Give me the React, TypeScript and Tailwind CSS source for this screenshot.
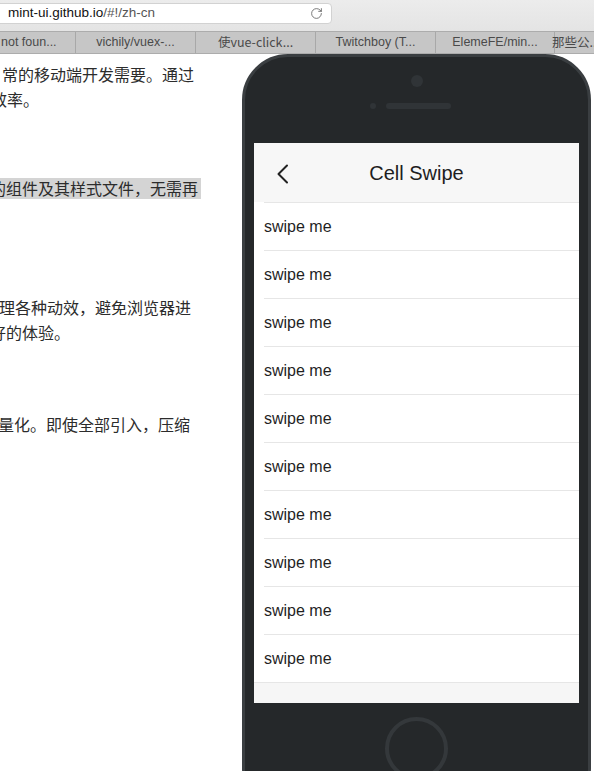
import { RotateCw } from 'lucide-react'

const tabs = ['not foun...', 'vichily/vuex-...', '使vue-click...', 'Twitchboy (T...', 'ElemeFE/min...']

const cjk = { fontFamily: '"Noto Sans CJK SC", "Noto Sans", sans-serif' }

function BrowserBar() {
  return (
    <div className="bg-gradient-to-b from-[#ececec] to-[#dedede]" style={{ fontFamily: '"Liberation Sans", Arial, sans-serif' }}>
      <div className="h-[31px] pt-[3px]">
        <div className="flex h-[21px] w-[336px] -ml-[4px] items-center justify-between rounded-[4px] border border-[#d2d2d2] bg-white pl-[11px] pr-[8px]">
          <span className="text-[13.5px] text-[#111]">
            mint-ui.github.io<span className="text-[#555]">/#!/zh-cn</span>
          </span>
          <RotateCw size={13} strokeWidth={1.6} className="text-[#666]" />
        </div>
      </div>
      <div className="flex h-[23px] border-t border-b border-[#acacac] bg-[#c6c6c6] text-[12.5px] text-[#4a4a4a]">
        <div className="flex w-[76px] items-center pl-[1px] border-r border-[#a8a8a8]">{tabs[0]}</div>
        {tabs.slice(1).map((t, i) => (
          <div
            key={t}
            className={`flex items-center justify-center border-r border-[#a8a8a8] ${i === 3 ? 'w-[119px]' : 'w-[120px]'}`}
            style={i === 1 ? cjk : undefined}
          >
            {t}
          </div>
        ))}
        <div className="flex flex-1 items-center -ml-[3px] overflow-hidden whitespace-nowrap" style={cjk}>
          那些公...
        </div>
      </div>
    </div>
  )
}

function DocText() {
  return (
    <div className="w-[242px] shrink-0 overflow-hidden whitespace-nowrap text-[16px] leading-[25px] text-[#2c2c2c]" style={cjk}>
      <p className="mt-[8px] ml-[2px]">常的移动端开发需要。通过</p>
      <p className="-ml-[9px]">效率。</p>
      <p className="mt-[66px] w-[201px] bg-[#d4d4d4] leading-[21px]">
        <span className="-ml-[10px] inline-block">的组件及其样式文件，无需再</span>
      </p>
      <p className="mt-[96px] -ml-[17px]">处理各种动效，避免浏览器进</p>
      <p className="-ml-[10px]">好的体验。</p>
      <p className="mt-[67px] -ml-[18px]">轻量化。即使全部引入，压缩</p>
    </div>
  )
}

function Phone() {
  const rows = Array.from({ length: 10 })
  return (
    <div className="h-[760px] w-[349px] shrink-0 rounded-[46px] border-[3px] border-[#3a3e41] bg-[#25282a]">
      <div className="flex h-[86px] flex-col items-center">
        <div className="mt-[18px] h-[12px] w-[12px] rounded-full bg-[#303437]" />
        <div className="mt-[16px] flex items-center gap-[10px] -ml-[13px]">
          <div className="h-[6px] w-[6px] rounded-full bg-[#303437]" />
          <div className="h-[6px] w-[65px] rounded-full bg-[#303437]" />
        </div>
      </div>
      <div className="mx-[9px] h-[560px] bg-[#f6f6f6] overflow-hidden" style={{ fontFamily: '"Liberation Sans", Arial, sans-serif' }}>
        <div className="relative flex h-[59px] items-center justify-center bg-[#f7f7f7]">
          <svg className="absolute left-[22px] top-[21px]" width="14" height="20" viewBox="0 0 14 20" fill="none">
            <path d="M11 1.5L2.5 10L11 18.5" stroke="#222" strokeWidth="2" strokeLinecap="round" strokeLinejoin="round" />
          </svg>
          <span className="text-[20px] text-[#1e1e1e]">Cell Swipe</span>
        </div>
        <div className="border-b border-[#e6e6e6] bg-white">
          {rows.map((_, i) => (
            <div key={i} className="pl-[10px]">
              <div className="flex h-[48px] items-center border-t border-[#e6e6e6] text-[16px] text-[#1f1f1f]">swipe me</div>
            </div>
          ))}
        </div>
      </div>
      <div className="flex justify-center pt-[14px]">
        <div className="h-[63px] w-[63px] rounded-full border-[4px] border-[#34383b]" />
      </div>
    </div>
  )
}

export default function App() {
  return (
    <div className="h-[771px] w-[594px] overflow-hidden bg-white">
      <BrowserBar />
      <div className="flex">
        <DocText />
        <Phone />
      </div>
    </div>
  )
}
